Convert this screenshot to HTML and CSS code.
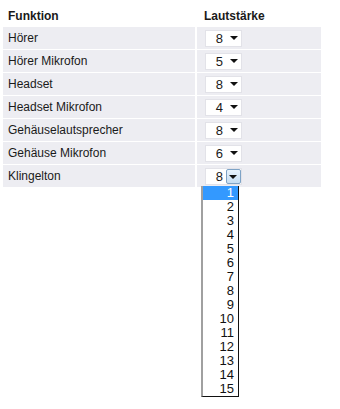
FILE: index.html
```html
<!DOCTYPE html>
<html lang="de">
<head>
	<meta charset="UTF-8">
	<title>Lautstärke</title>
	<link rel="stylesheet" href="styles.css">
</head>
<body>
	<div class="wrap">
		<table class="vol">
			<tr class="head">
				<th class="name">Funktion</th>
				<th class="val">Lautstärke</th>
			</tr>
			<tr><td class="name">Hörer</td><td class="val"><div class="sel"><span class="num">8</span><span class="arr"></span></div></td></tr>
			<tr><td class="name">Hörer Mikrofon</td><td class="val"><div class="sel"><span class="num">5</span><span class="arr"></span></div></td></tr>
			<tr><td class="name">Headset</td><td class="val"><div class="sel"><span class="num">8</span><span class="arr"></span></div></td></tr>
			<tr><td class="name">Headset Mikrofon</td><td class="val"><div class="sel"><span class="num">4</span><span class="arr"></span></div></td></tr>
			<tr><td class="name">Gehäuselautsprecher</td><td class="val"><div class="sel"><span class="num">8</span><span class="arr"></span></div></td></tr>
			<tr><td class="name">Gehäuse Mikrofon</td><td class="val"><div class="sel"><span class="num">6</span><span class="arr"></span></div></td></tr>
			<tr><td class="name">Klingelton</td><td class="val"><div class="sel open"><span class="num">8</span><span class="arr"></span></div></td></tr>
		</table>
		<div class="list">
			<div class="opt on">1</div>
			<div class="opt">2</div>
			<div class="opt">3</div>
			<div class="opt">4</div>
			<div class="opt">5</div>
			<div class="opt">6</div>
			<div class="opt">7</div>
			<div class="opt">8</div>
			<div class="opt">9</div>
			<div class="opt">10</div>
			<div class="opt">11</div>
			<div class="opt">12</div>
			<div class="opt">13</div>
			<div class="opt">14</div>
			<div class="opt">15</div>
		</div>
	</div>
</body>
</html>
```
FILE: styles.css
```css
html {
	font-family: "Liberation Sans", Arial, sans-serif;
	font-size: 12px;
}
body {
	margin: 0;
	padding: 0;
	min-height: 409px;
	background: #fff;
	color: #1a1a1a;
}
.wrap {
	position: relative;
	min-height: 405px;
	padding: 4px 0 0 3px;
}
.vol {
	border-collapse: separate;
	border-spacing: 0 1px;
	width: 318px;
}
.vol th {
	font-weight: bold;
	text-align: left;
	height: 21px;
	vertical-align: middle;
	padding: 0;
}
.vol td {
	background: #ededf2;
	height: 22px;
	padding: 0;
	vertical-align: middle;
}
.vol .name {
	width: 187px;
	padding-left: 5px;
	border-right: 2px solid #fff;
}
.vol th.name {
	border-right: 2px solid transparent;
}
.vol .val {
	padding-left: 8px;
}
.vol th.val {
	padding-left: 7px;
}
.sel {
	width: 35px;
	height: 15px;
	background: #fff;
	border: 1px solid #e2e2e8;
	display: flex;
	align-items: center;
}
.num {
	width: 17px;
	text-align: right;
	font-size: 13px;
}
.arr {
	margin-left: 7px;
	width: 0;
	height: 0;
	border-left: 4px solid transparent;
	border-right: 4px solid transparent;
	border-top: 4px solid #111;
}
.open .arr {
	margin-left: 3px;
	width: 15px;
	height: 15px;
	border: 1px solid #7ea3c6;
	border-radius: 2px;
	background: linear-gradient(#e8f3fc, #c5ddf2);
	box-sizing: border-box;
	position: relative;
}
.open .arr::after {
	content: "";
	position: absolute;
	left: 2px;
	top: 5px;
	border-left: 4px solid transparent;
	border-right: 4px solid transparent;
	border-top: 4px solid #111;
}
.list {
	position: absolute;
	left: 201px;
	top: 186px;
	width: 38px;
	background: #fff;
	border-left: 2px solid #a0a0a0;
	border-right: 1px solid #111;
	border-bottom: 1px solid #111;
	box-sizing: border-box;
	z-index: 5;
}
.opt {
	height: 14px;
	line-height: 14px;
	text-align: right;
	padding-right: 4px;
	font-size: 13px;
	color: #111;
}
.opt.on {
	background: #3399ff;
	color: #fff;
}
```
